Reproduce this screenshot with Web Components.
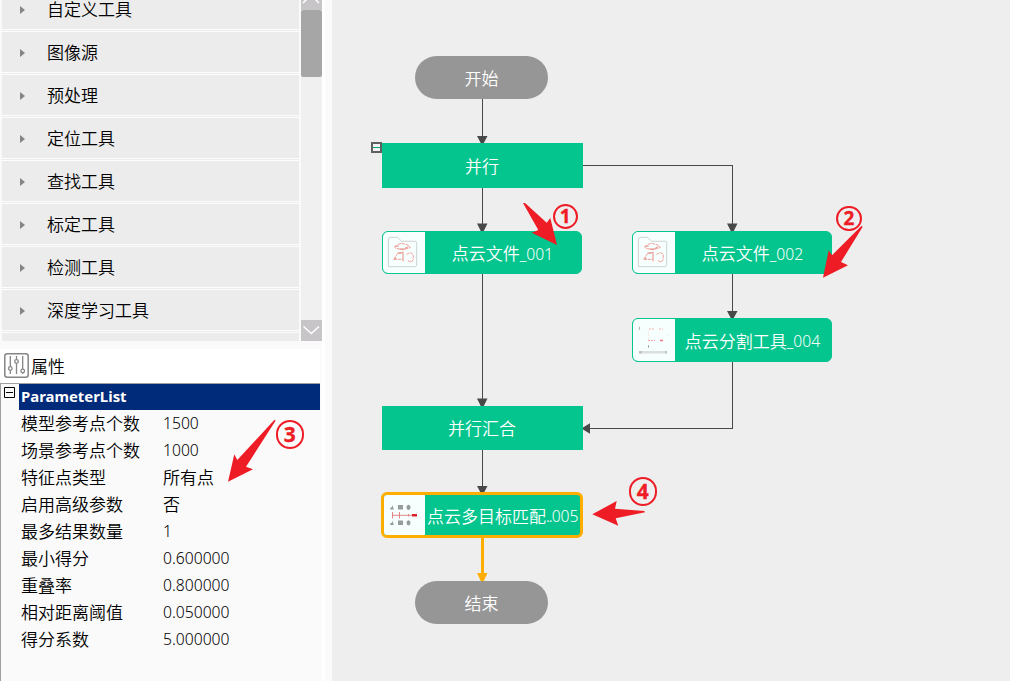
<!DOCTYPE html>
<html lang="zh-CN">
<head>
<meta charset="utf-8">
<title>流程编辑器</title>
<style>
html,body{margin:0;height:100%;overflow:hidden}
body{font-family:"Noto Sans","Noto Sans CJK SC",sans-serif;font-size:17px;line-height:1;color:#111}
</style>
</head>
<body>
<flow-app></flow-app>
<script>
function define(name, html, setup){
  const t=document.createElement('template');
  t.innerHTML=html;
  customElements.define(name, class extends HTMLElement{
    connectedCallback(){
      if(this.shadowRoot) return;
      this.attachShadow({mode:'open'}).appendChild(t.content.cloneNode(true));
      if(setup) setup(this,this.shadowRoot);
    }
  });
}

define('mixed-text', `<style>
:host{display:inline-block;white-space:nowrap;font-family:"Noto Sans CJK SC",sans-serif;font-weight:350}
.l{font:350 15.7px/1 "Noto Sans",sans-serif;position:relative;top:-.5px}
.d{letter-spacing:-1px}
</style><span id="t"></span>`, (h,r)=>{
  const out=r.getElementById('t');
  for(const part of h.getAttribute('text').match(/^[\d.]+$|\.\.|_?\d+|[^\x20-\x7e]+/g)){
    const s=document.createElement('span');
    s.textContent=part;
    if(/^[\x20-\x7e]/.test(part)) s.className=part==='..'?'l d':'l';
    out.appendChild(s);
  }
});

define('tool-row', `<style>
:host{display:flex;align-items:center;height:40px;flex:none;background:#ececec;border-bottom:3px double #fdfdfd;padding-left:18px;box-sizing:content-box}
svg{width:5px;height:8px;margin:1px 22px 0 0;flex:none}
</style><svg viewBox="0 0 5 8"><path d="M0 0L5 4L0 8Z" fill="#858585"/></svg><slot></slot>`);

define('tool-list', `<style>
:host{display:flex;height:341px;overflow:hidden;box-sizing:border-box;padding-left:2px}
.rows{width:297px;height:341px;overflow:hidden;background:#ececec;color:#000;margin-right:2px}
.in{display:flex;flex-direction:column;margin-top:-11px}
mixed-text{margin-top:-1px}
.bar{width:21px;background:#f0f0f0;display:flex;flex-direction:column;height:341px}
.bar svg{flex:none;display:block}
.thumb{height:67px;background:#a6a6a6;border-radius:2px;flex:none}
.gap{flex:1}
</style>
<div class="rows"><div class="in" id="in"></div></div>
<div class="bar">
<svg width="21" height="10" viewBox="0 0 21 10"><path d="M0 0H21V10H0Z" fill="#c8c5c8"/><path d="M2 3L10 -5L18 3" fill="none" stroke="#fff" stroke-width="1.5"/></svg>
<div class="thumb"></div><div class="gap"></div>
<svg width="21" height="21" viewBox="0 0 21 21"><path d="M0 0H21V21H0Z" fill="#c8c5c8"/><path d="M2.5 6.5L10.3 13.5L18 6.5" fill="none" stroke="#fff" stroke-width="1.5"/></svg>
</div>`, (h,r)=>{
  r.getElementById('in').innerHTML=['自定义工具','图像源','预处理','定位工具','查找工具','标定工具','检测工具','深度学习工具']
   .map(t=>`<tool-row><mixed-text text="${t}"></mixed-text></tool-row>`).join('');
});

define('param-grid', `<style>
:host{display:block;flex:1;width:320px;box-sizing:border-box;border-top:1px solid #a0a0a0;border-left:1px solid #a0a0a0;background:#fafafa;color:#000}
.head{display:flex;height:25px}
.box{width:18px;flex:none;padding:3px 0 0 3px;box-sizing:border-box}
.box svg{display:block}
.title{flex:1;height:26px;background:#002a7a;color:#fff;font:bold 14.9px/25px "Noto Sans",sans-serif;padding-left:2px}
.row{display:grid;grid-template-columns:142px 1fr;align-items:center;height:27px;padding-left:20px}
</style>
<div class="head"><div class="box"><svg width="11" height="11" viewBox="0 0 11 11"><path d="M.5 .5H10.5V10.5H.5ZM2 5.5H9" fill="none" stroke="#000"/></svg></div><div class="title">ParameterList</div></div>
<div id="rows"></div>`, (h,r)=>{
  r.getElementById('rows').innerHTML=[['模型参考点个数','1500'],['场景参考点个数','1000'],['特征点类型','所有点'],['启用高级参数','否'],['最多结果数量','1'],['最小得分','0.600000'],['重叠率','0.800000'],['相对距离阈值','0.050000'],['得分系数','5.000000']]
   .map(([a,b])=>`<div class="row"><mixed-text text="${a}"></mixed-text><mixed-text text="${b}"></mixed-text></div>`).join('');
});

define('property-header', `<style>
:host{display:flex;align-items:center;height:34px;margin-top:8px;background:#fff;padding-left:4px;width:316px;color:#000;flex:none}
svg{flex:none;margin:-1px 2px 0 0}
mixed-text{margin-top:-2px}
</style>
<svg width="25" height="25" viewBox="0 0 25 25" fill="none" stroke="#858585"><rect x=".8" y=".8" width="23.4" height="23.4" rx="2.5" stroke-width="1.5"/><g stroke-width="1.3"><path d="M6.3 3V13.5M6.3 17.5V21M12.5 3V6.5M12.5 10.5V21M18.7 3V16M18.7 20V21"/><circle cx="6.3" cy="15.5" r="1.8"/><circle cx="12.5" cy="8.5" r="1.8"/><circle cx="18.7" cy="18" r="1.8"/></g></svg><mixed-text text="属性"></mixed-text>`);

define('side-panel', `<style>
:host{display:flex;flex-direction:column;width:332px;height:681px;flex:none;background:linear-gradient(90deg,#fafafa 322px,#fff 322px,#fff 325px,#fafafa 325px)}
</style><tool-list></tool-list><property-header></property-header><param-grid></param-grid>`);

const ICONS={
 file:`<path d="M5.5 35.500V8Q5.500 5.500 7.500 5.500H15L19 9.500H33Q34.500 9.500 34.500 11V34L33.500 35.500Z" fill="none" stroke="#cdd1d0"/><g fill="none" stroke="#f19d98" stroke-width="1" stroke-dasharray="3.500 .8"><path d="M12 16L15 13L19 11.500L26 13.500L28 16L21 18L14 17Z"/><path d="M11 28L15 22L20 21M11 28H20M24 23L28 21L31 23V28L29 31L25 29"/></g><path d="M12 14.500H16M22 17L26 15M20.500 20V30M13 26V28M15 21.500H19M17 17.500H22" stroke="#e68580" fill="none"/>`,
 cut:`<path d="M6.500 7.500V11" stroke="#b9bdbb" stroke-width="1.200"/><path d="M15.500 26.500V28.500" stroke="#8a8e8c"/><path d="M15.500 12V22" stroke="#f7dedb" stroke-dasharray="1 1" fill="none"/><path d="M16 10H22M26 10H30" stroke="#f9b0b0" stroke-dasharray="2 1"/><path d="M15 21.500H22" stroke="#f9a6a4" stroke-dasharray="2 1"/><path d="M27 21.500H30" stroke="#f07878" stroke-width="1.600"/><path d="M34 16H35" stroke="#ddd"/><path d="M6 33.300H34" stroke="#dcdfdd" stroke-width="2.600"/><path d="M6 33.300H9M32 33.300H34" stroke="#c0c3c1" stroke-width="2.600"/>`,
 match:`<g fill="#979b99"><path d="M6 15.500L6.800 13L8 13.500L8.500 11L9.800 15.500ZM6 31L6.800 28.500L8 29L8.500 26.500L9.800 31Z"/><rect x="14" y="11" width="5" height="4.500"/><rect x="14" y="26.500" width="5" height="4.500"/><ellipse cx="24.500" cy="13.300" rx="2" ry="2.600"/><ellipse cx="24.500" cy="28.800" rx="2" ry="2.600"/></g><g stroke="#e27b7c" stroke-width=".9"><path d="M8.500 18V24.500M15.500 18V24.500M24.500 20V22.500M8 21.300H29"/><path d="M28 21.300H33" stroke="#d72328" stroke-width="2.400"/></g>`
};
define('flow-node', `<style>
:host{position:absolute;box-sizing:border-box;display:flex;color:#fff;background:#03c58d;align-items:center;overflow:hidden}
:host([kind=end]){background:#969696;border-radius:22px}
:host([icon]){border:1px solid #03c58d;border-radius:6px}
:host([selected]){border:3px solid #ffae00;border-radius:6px}
svg{flex:none;background:#f6fffe;align-self:stretch;width:42px;height:100%;display:none}
:host([icon]) svg{display:block}
div{flex:1;text-align:center;white-space:nowrap;padding-right:1px}
:host([icon]) div{padding-top:2px}
:host([selected]) div{text-align:left;padding:2px 0 0 2px}
:host([kind=end]) div{padding-top:1px;padding-right:0}
</style><svg viewBox="0 0 42 42" preserveAspectRatio="xMinYMin"></svg><div></div>`, (h,r)=>{
  const [x,y,w,hh]=h.getAttribute('box').split(' ');
  Object.assign(h.style,{left:x+'px',top:y+'px',width:w+'px',height:hh+'px'});
  const svg=r.querySelector('svg');
  if(h.hasAttribute('icon')) svg.innerHTML=ICONS[h.getAttribute('icon')];
  if(h.hasAttribute('selected')){svg.style.width='41px';svg.setAttribute('viewBox','0 1 41 40');}
  r.querySelector('div').innerHTML=`<mixed-text text="${h.getAttribute('label')}"></mixed-text>`;
});

define('step-badge', `<style>
:host{position:absolute;box-sizing:border-box;border:2.2px solid #ee1c25;border-radius:50%;color:#ee1c25;display:flex;align-items:center;justify-content:center;font:bold 20px/1 "Noto Sans",sans-serif;-webkit-text-stroke:.3px #ee1c25}
</style><slot></slot>`, h=>{
  const [x,y,d,f]=h.getAttribute('at').split(' ');
  Object.assign(h.style,{left:x+'px',top:y+'px',width:d+'px',height:d+'px',fontSize:f+'px'});
});

define('flow-canvas', `<style>
:host{display:block;position:relative;width:678px;height:681px;background:#eee;overflow:hidden}
svg{position:absolute;left:0;top:0;display:block}
</style>
<svg width="678" height="681" viewBox="332 0 678 681">
<g fill="none" stroke="#484848" shape-rendering="crispEdges"><path d="M482.5 99V143M482.5 188V231M482.5 274V406M482.5 450V493M583 165.5H732.5V231M732.5 274V318M732.5 362V428.5H584"/></g>
<g fill="#484848"><path d="M477 136H487.500L483.500 143.500H481ZM477 223.500H487.500L483.500 231.500H481ZM477 398.500H487.500L483.500 406.500H481ZM477 486H487.500L483.500 493.500H481ZM727 223.500H737.500L733.500 231.500H731ZM727 311H737.500L733.500 318.500H731ZM590 423.300V433.700L583 429.500V427.500Z"/></g>
<path d="M482.500 538V578" stroke="#ffae00" stroke-width="3"/><path d="M477 573H487.500L483.500 581.500H481Z" fill="#ffae00"/>
<rect x="372" y="143" width="9" height="9" fill="#f3f3f3" stroke="#606060" stroke-width="2"/><path d="M373 147.500H380" stroke="#03a578"/>
</svg>
<flow-node kind="end" box="83 56 133 43" label="开始"></flow-node>
<flow-node box="50 143 201 45" label="并行"></flow-node>
<flow-node icon="file" box="50 231 200 43" label="点云文件_001"></flow-node>
<flow-node icon="file" box="300 231 200 43" label="点云文件_002"></flow-node>
<flow-node icon="cut" box="300 318 200 44" label="点云分割工具_004"></flow-node>
<flow-node box="50 406 201 44" label="并行汇合"></flow-node>
<flow-node icon="match" selected box="49 492 202 46" label="点云多目标匹配..005"></flow-node>
<flow-node kind="end" box="83 581 133 43" label="结束"></flow-node>`);

define('guide-layer', `<style>
:host{position:absolute;left:0;top:0;width:1010px;height:681px}
svg{display:block}
</style>
<svg width="1010" height="681" fill="#ee1c25">
<path d="M523 203L525 203L546.700 222.700L550.300 218L557 245L531.700 232.700L538.300 230Z"/>
<path d="M862.700 226.700L861.300 226L832 255.300L828.700 250.300L823 277.700L848 265.300L841 262Z"/>
<path d="M275.700 420.500L274.300 420L237.300 460L234.300 454.300L228 481.700L253 469.300L246 466.700Z"/>
<path d="M592.300 514.300L616.700 501L615 508.700L644.300 511L645 512.300L615.700 518.300L618.300 525.700Z"/>
</svg>
<step-badge at="552.500 203.700 25.500 19">1</step-badge>
<step-badge at="836.300 205.500 25.500 19">2</step-badge>
<step-badge at="275.500 420 28.700 21">3</step-badge>
<step-badge at="628.500 477.200 28.700 21">4</step-badge>`);

define('flow-app', `<style>
:host{display:flex;position:relative;width:1010px;height:681px;overflow:hidden}
</style><side-panel></side-panel><flow-canvas></flow-canvas><guide-layer></guide-layer>`);
</script>
</body>
</html>
